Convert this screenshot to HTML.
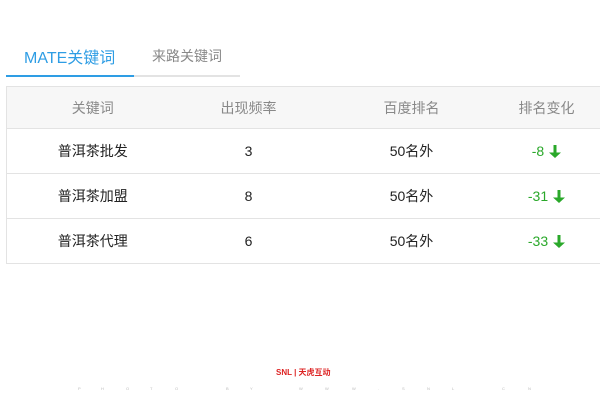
<!DOCTYPE html>
<html><head><meta charset="utf-8"><style>
*{margin:0;padding:0;box-sizing:border-box}
body{width:600px;height:400px;background:#fff;font-family:"Liberation Sans","Noto Sans CJK SC",sans-serif;position:relative;overflow:hidden}
.tab{position:absolute;top:44px;font-size:16px}
.t1{left:24px;color:#2e9de4}
.t2{left:152px;color:#888;font-size:14px;top:46px}
.ul{position:absolute;top:75px;height:2px;background:#e3e3e3;left:6px;width:234px}
.ul i{position:absolute;left:0;top:0;height:2px;width:128px;background:#2e9de4}
table{position:absolute;left:6px;top:86px;width:594px;table-layout:fixed;border-collapse:collapse;font-size:14px;border-left:1px solid #e3e3e3}
td,th{border-top:1px solid #e3e3e3;border-bottom:1px solid #e3e3e3;text-align:center;font-weight:normal;height:45px}
th{background:#f7f7f7;color:#888;height:42px}
td:last-child,th:last-child{padding-right:12px}
td{color:#222}
.g{color:#2aa82a}
.ar{display:inline-block;vertical-align:-2px;margin-left:5px}
.logo{position:absolute;left:276px;top:367px;font-size:8px;font-weight:bold;color:#d22}
.ft{position:absolute;top:386px;left:0;width:600px;font-size:4px;color:#bbb}
.ft span{position:absolute}
</style></head><body>
<div class="tab t1">MATE关键词</div>
<div class="tab t2">来路关键词</div>
<div class="ul"><i></i></div>
<table>
<colgroup><col style="width:172px"><col style="width:140px"><col style="width:186px"><col style="width:96px"></colgroup>
<tr><th>关键词</th><th>出现频率</th><th>百度排名</th><th>排名变化</th></tr>
<tr><td>普洱茶批发</td><td>3</td><td>50名外</td><td class="g">-8<svg class="ar" width="12" height="13" viewBox="0 0 12 13"><path d="M4.5 0h3v7.5H12L6 13 0 7.5h4.5z" fill="#2aa82a"/></svg></td></tr>
<tr><td>普洱茶加盟</td><td>8</td><td>50名外</td><td class="g">-31<svg class="ar" width="12" height="13" viewBox="0 0 12 13"><path d="M4.5 0h3v7.5H12L6 13 0 7.5h4.5z" fill="#2aa82a"/></svg></td></tr>
<tr><td>普洱茶代理</td><td>6</td><td>50名外</td><td class="g">-33<svg class="ar" width="12" height="13" viewBox="0 0 12 13"><path d="M4.5 0h3v7.5H12L6 13 0 7.5h4.5z" fill="#2aa82a"/></svg></td></tr>
</table>
<div class="logo">SNL | 天虎互动</div>
<div class="ft"><span style="left:78px">P</span><span style="left:101px">H</span><span style="left:126px">O</span><span style="left:150px">T</span><span style="left:175px">O</span><span style="left:226px">B</span><span style="left:250px">Y</span><span style="left:299px">W</span><span style="left:325px">W</span><span style="left:352px">W</span><span style="left:378px">.</span><span style="left:402px">S</span><span style="left:427px">N</span><span style="left:452px">L</span><span style="left:502px">C</span><span style="left:528px">N</span></div>
</body></html>
